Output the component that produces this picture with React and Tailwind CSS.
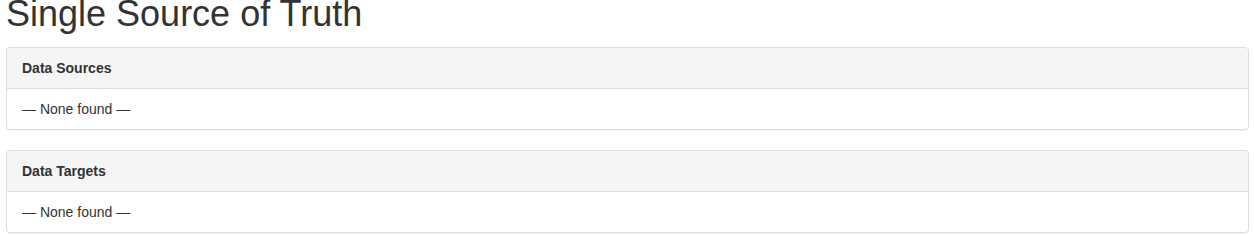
import React from "react";

const panels = [
  { title: "Data Sources", body: "— None found —" },
  { title: "Data Targets", body: "— None found —" },
];

function Panel({ title, body }) {
  return (
    <section className="mb-5 rounded border border-[#dddddd] bg-white shadow-[0_1px_1px_rgba(0,0,0,0.05)]">
      <div className="rounded-t border-b border-[#dddddd] bg-[#f5f5f5] px-[15px] py-[10px] text-[14px] font-bold leading-5 text-[#333333]">
        {title}
      </div>
      <div className="px-[15px] py-[10px] text-[14px] leading-5 text-[#333333]">{body}</div>
    </section>
  );
}

export default function App() {
  return (
    <div className="bg-white pl-[6px] pr-[5px] font-['Liberation_Sans',Arial,sans-serif]">
      <h1 className="-mt-[6px] mb-[13px] text-[36px] font-normal leading-[1.1] text-[#333333]">
        Single Source of Truth
      </h1>
      {panels.map((panel) => (
        <Panel key={panel.title} title={panel.title} body={panel.body} />
      ))}
    </div>
  );
}
